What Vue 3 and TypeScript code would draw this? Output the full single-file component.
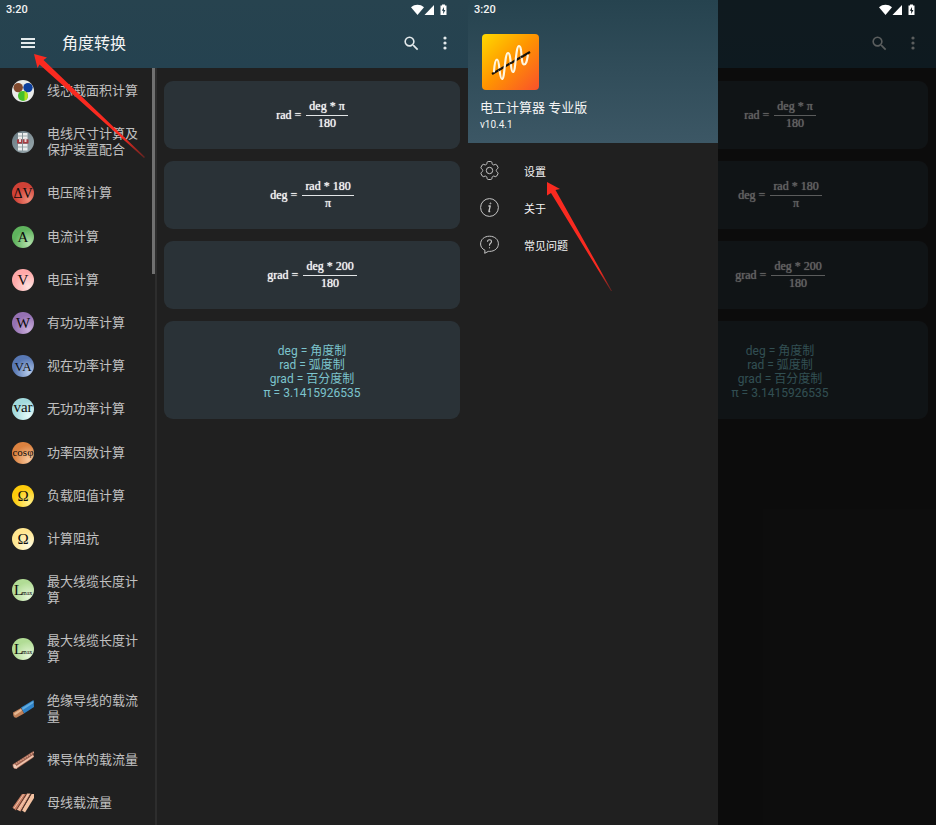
<script setup lang="ts">
interface Entry {
  label: string
  icon: string
  glyph?: string
  size?: number
}

interface Formula {
  left: string
  top: string
  bottom: string
}

interface Screen {
  id: string
  drawer: boolean
}

const screens: Screen[] = [
  { id: 'main', drawer: false },
  { id: 'menu', drawer: true },
]

const entries: Entry[] = [
  { label: '线芯截面积计算', icon: 'cores' },
  { label: '电线尺寸计算及保护装置配合', icon: 'breaker' },
  { label: '电压降计算', icon: 'red', glyph: 'ΔV', size: 14 },
  { label: '电流计算', icon: 'green', glyph: 'A', size: 15 },
  { label: '电压计算', icon: 'pink', glyph: 'V', size: 15 },
  { label: '有功功率计算', icon: 'purple', glyph: 'W', size: 15 },
  { label: '视在功率计算', icon: 'blue', glyph: 'VA', size: 13 },
  { label: '无功功率计算', icon: 'aqua', glyph: 'var', size: 15 },
  { label: '功率因数计算', icon: 'orange', glyph: 'cosφ', size: 11 },
  { label: '负载阻值计算', icon: 'yellow', glyph: 'Ω', size: 15 },
  { label: '计算阻抗', icon: 'cream', glyph: 'Ω', size: 15 },
  { label: '最大线缆长度计算', icon: 'lime', glyph: 'L' },
  { label: '最大线缆长度计算', icon: 'lime', glyph: 'L' },
  { label: '绝缘导线的载流量', icon: 'insulated' },
  { label: '裸导体的载流量', icon: 'bare' },
  { label: '母线载流量', icon: 'busbar' },
]

const formulas: Formula[] = [
  { left: 'rad', top: 'deg * π', bottom: '180' },
  { left: 'deg', top: 'rad * 180', bottom: 'π' },
  { left: 'grad', top: 'deg * 200', bottom: '180' },
]

const legend: string[] = ['deg = 角度制', 'rad = 弧度制', 'grad = 百分度制', 'π = 3.1415926535']

const menu = [
  { label: '设置', icon: 'gear' },
  { label: '关于', icon: 'info' },
  { label: '常见问题', icon: 'faq' },
]
</script>

<template>
  <div class="board">
    <section v-for="screen in screens" :key="screen.id" class="phone">
      <div class="status">
        <span>3:20</span>
        <svg class="status-icons" width="38" height="12" viewBox="0 0 38 12" aria-hidden="true">
          <path d="M0 3.2C3.6-.1 9.4-.1 13 3.2L6.5 11Z" />
          <path d="M23 1v10H13.500Z" />
          <path fill-rule="evenodd" d="M31 .5h3v1h1.500v9.500h-6V1.500H31ZM33 3l-2.200 3.800h1.400V10l2.200-4H33Z" />
        </svg>
      </div>

      <header class="appbar">
        <button v-if="!screen.drawer" class="icon-button nav-button" type="button" aria-label="菜单">
          <svg width="14" height="12" viewBox="0 0 14 12"><path d="M0 1h14v2H0zM0 5h14v2H0zM0 9h14v2H0z" fill="currentColor" /></svg>
        </button>
        <h1 v-if="!screen.drawer" class="title">角度转换</h1>
        <button class="icon-button search-button" type="button" aria-label="搜索">
          <svg width="19" height="19" viewBox="0 0 24 24">
            <path fill="currentColor" d="M15.500 14h-.79l-.28-.27A6.470 6.470 0 0 0 16 9.500 6.500 6.500 0 1 0 9.500 16c1.610 0 3.090-.59 4.230-1.570l.27.28v.79l5 4.990L20.490 19l-4.990-5Zm-6 0C7.010 14 5 11.990 5 9.500S7.010 5 9.500 5 14 7.010 14 9.500 11.990 14 9.500 14Z" />
          </svg>
        </button>
        <button class="icon-button more-button" type="button" aria-label="更多">
          <svg width="4" height="14" viewBox="0 0 4 14" fill="currentColor">
            <circle cx="2" cy="2" r="1.600" /><circle cx="2" cy="7" r="1.600" /><circle cx="2" cy="12" r="1.600" />
          </svg>
        </button>
      </header>

      <div class="body">
        <nav class="side">
          <ul v-if="!screen.drawer" class="entries">
            <li v-for="(entry, i) in entries" :key="i" class="entry">
              <a class="entry-link" href="#">
                <span class="badge" :class="entry.icon">
                  <svg width="22" height="22" viewBox="0 0 22 22" aria-hidden="true">
                    <template v-if="entry.icon === 'cores'">
                      <circle cx="6.200" cy="7.600" r="4.700" fill="#80492d" />
                      <circle cx="16" cy="7.600" r="4.700" fill="#0d3f9c" />
                      <circle cx="11" cy="15.900" r="5" fill="#45c02a" />
                      <path d="M12.500 11.200a5 5 0 0 1 0 9.400Z" fill="#b5e018" />
                    </template>
                    <template v-else-if="entry.icon === 'breaker'">
                      <path d="M6 2h4v6H6zM11 2h4.500v6H11zM6 13h4v6.500H6zM11 13h4.500v6.500H11z" fill="#eceeee" />
                      <path d="M5 8.500h11.500v4H5z" fill="#a63b40" />
                      <path d="M7 7h2v4H7zM12.500 7h2v4h-2z" fill="#e9d5d5" />
                      <path d="M5.500 5h10M5.500 16h10M10.500 2v17" stroke="#8a979b" stroke-width=".8" />
                    </template>
                    <template v-else-if="entry.icon === 'insulated'">
                      <path d="M9 9.500 21.500 2 22 9 12 15.500Z" fill="#2f83c9" />
                      <path d="M10 10 21.500 3v2L10.800 12Z" fill="#62acdf" />
                      <path d="M1 14.500 9 10l3 5.500-7.500 4.200Q1 20 1 14.500Z" fill="#bf8059" />
                      <path d="m2 15.300 7-4.300.9 1.700L2.800 17.500Z" fill="#e6b892" />
                    </template>
                    <template v-else-if="entry.icon === 'bare'">
                      <path d="M.5 15.500 21.500 2v6.500L4.500 20Q.5 20 .5 15.500Z" fill="#9c6250" />
                      <path d="m2 16 20-12.800" stroke="#d69b84" stroke-width="1.400" stroke-dasharray="1.500 1" />
                      <path d="m3.500 18.700 18-12" stroke="#f0c3ac" stroke-width="1.800" />
                      <path d="m1 15.500 3 .5 1 3.500-3-.3Z" fill="#efcbb8" />
                    </template>
                    <template v-else-if="entry.icon === 'busbar'">
                      <path d="M.5 15.500 10 2h4L4 18.500Z" fill="#c77d62" />
                      <path d="M4.500 17.500 15 1.500h3.500L8.500 19.500Z" fill="#e8a98a" />
                      <path d="M10 18.500 19.500 2H22v4L13 20.500Z" fill="#f4c2a2" />
                      <path d="M4.200 18 14.200 2.500M8.800 19.200 19 2" stroke="#5f342a" stroke-width=".9" />
                      <path d="M2 16.500 11.500 2.500M6.500 18 16.500 2" stroke="#f7d4bf" stroke-width=".8" />
                    </template>
                    <template v-else-if="entry.icon === 'lime'">
                      <text x="2" y="16" font-size="15">L</text>
                      <text x="10" y="16" font-size="6">max</text>
                    </template>
                    <text v-else x="11" :y="entry.glyph === 'var' || entry.icon === 'orange' ? 14 : 16" text-anchor="middle" :font-size="entry.size">{{ entry.glyph }}</text>
                  </svg>
                </span>
                <span class="entry-label">{{ entry.label }}</span>
              </a>
            </li>
          </ul>
          <div v-if="!screen.drawer" class="thumb"></div>
        </nav>

        <main class="cards">
          <article v-for="formula in formulas" :key="formula.left" class="card formula">
            <span>{{ formula.left }} =</span>
            <span class="fraction">
              <span class="numerator">{{ formula.top }}</span>
              <span class="denominator">{{ formula.bottom }}</span>
            </span>
          </article>
          <article class="card legend">
            <p v-for="line in legend" :key="line" class="legend-line">{{ line }}</p>
          </article>
        </main>
      </div>

      <template v-if="screen.drawer">
        <div class="scrim"></div>
        <aside class="drawer">
          <header class="drawer-head">
            <svg class="logo" width="57" height="56" viewBox="0 0 57 56" aria-hidden="true">
              <path d="M10 40 48 18" stroke="#17110a" stroke-width="2.200" />
              <path d="M12 37.500C12.500 30 13.500 25.500 15 25.500 18 25.500 17 45 20 45S22.500 19 26 19 28 38 31 38 33.500 12 37 12 38.500 30.500 42 30.500C44.500 30.500 45 26 45.800 21.500" fill="none" stroke="#fff6df" stroke-width="2.200" stroke-linecap="round" />
              <path d="m16.500 36.200 2.500-1.400M28 29.600l2-1.200M39 23.200l2-1.200" stroke="#17110a" stroke-width="2.200" />
            </svg>
            <p class="product">电工计算器 专业版</p>
            <p class="version">v10.4.1</p>
          </header>
          <nav>
            <ul class="menu">
              <li v-for="item in menu" :key="item.label">
                <a class="menu-link" href="#">
                  <svg v-if="item.icon === 'gear'" width="19" height="19" viewBox="2.500 2.500 19 19" class="line-icon" aria-hidden="true">
                    <path d="M9.594 3.940c.09-.542.56-.94 1.110-.94h2.593c.55 0 1.020.398 1.110.94l.213 1.281c.063.374.313.686.645.87.074.04.147.083.22.127.325.196.72.257 1.075.124l1.217-.456a1.125 1.125 0 0 1 1.370.49l1.296 2.247a1.125 1.125 0 0 1-.26 1.431l-1.003.827c-.293.241-.438.613-.43.992a7.723 7.723 0 0 1 0 .255c-.008.378.137.75.43.991l1.004.827c.424.35.534.955.26 1.430l-1.298 2.247a1.125 1.125 0 0 1-1.369.491l-1.217-.456c-.355-.133-.75-.072-1.076.124a6.470 6.470 0 0 1-.22.128c-.331.183-.581.495-.644.869l-.213 1.281c-.09.543-.56.94-1.110.94h-2.594c-.55 0-1.019-.398-1.110-.94l-.213-1.281c-.062-.374-.312-.686-.644-.87a6.520 6.520 0 0 1-.22-.127c-.325-.196-.72-.257-1.076-.124l-1.217.456a1.125 1.125 0 0 1-1.369-.49l-1.297-2.247a1.125 1.125 0 0 1 .26-1.431l1.004-.827c.292-.24.437-.613.43-.991a6.932 6.932 0 0 1 0-.255c.007-.38-.138-.751-.43-.992l-1.004-.827a1.125 1.125 0 0 1-.26-1.430l1.297-2.247a1.125 1.125 0 0 1 1.370-.491l1.216.456c.356.133.751.072 1.076-.124.072-.044.146-.086.22-.128.332-.183.582-.495.644-.869l.214-1.280Z" />
                    <circle cx="12" cy="12" r="3.200" />
                  </svg>
                  <svg v-else-if="item.icon === 'info'" width="19" height="19" viewBox="0 0 19 19" class="line-icon" aria-hidden="true">
                    <circle cx="9.500" cy="9.500" r="8.900" />
                    <path d="M8.400 8h1.800L8.900 13.500h1.300" stroke-width="1.300" />
                    <circle cx="10.400" cy="5.400" r=".5" />
                  </svg>
                  <svg v-else width="19" height="19" viewBox="0 0 19 19" class="line-icon" aria-hidden="true">
                    <path d="M5 15.300C2.200 14 .6 11.700.6 9 .6 4.500 4.300 1.200 9.500 1.200s8.900 3.300 8.900 7.600-3.700 7.600-8.900 7.600H8.300L4.700 18.300Z" />
                    <path d="M7.500 6.800C7.500 5.500 8.300 4.800 9.500 4.800s2 .8 2 1.900c0 1.500-2 1.700-2 3.400v.6M9.500 12.300v1" stroke-width="1.100" />
                  </svg>
                  <span>{{ item.label }}</span>
                </a>
              </li>
            </ul>
          </nav>
        </aside>
        <svg class="pointer pointer-settings" width="66" height="110" viewBox="0 0 66 110" aria-hidden="true">
          <defs>
            <linearGradient id="fade-settings" gradientUnits="userSpaceOnUse" x1="1" y1="1" x2="65" y2="109">
              <stop offset=".8" stop-color="#f92a20" /><stop offset="1" stop-color="#f92a20" stop-opacity=".3" />
            </linearGradient>
          </defs>
          <path d="M0 0 13 7 8.500 8 65 109 64 109 4 11 0 13.500Z" fill="url(#fade-settings)" />
        </svg>
      </template>

      <svg v-else class="pointer pointer-nav" width="112" height="104" viewBox="0 0 112 104" aria-hidden="true">
        <defs>
          <linearGradient id="fade-nav" gradientUnits="userSpaceOnUse" x1="0" y1="0" x2="111" y2="103">
            <stop offset=".8" stop-color="#f92a20" /><stop offset="1" stop-color="#f92a20" stop-opacity=".3" />
          </linearGradient>
        </defs>
        <path d="M0 0 13 3.500 9.500 6 111 103 110 104 5.500 10.500 3.500 14Z" fill="url(#fade-nav)" />
      </svg>
    </section>
  </div>
</template>

<style>
body {
  margin: 0;
  background: #202020;
}
</style>

<style scoped>
.board {
  display: flex;
  min-height: 100vh;
  font-family: Roboto, "Noto Sans CJK SC", sans-serif;
  color: #f4f4f4;
}

.phone {
  position: relative;
  display: flex;
  flex: 1;
  flex-direction: column;
  min-width: 0;
  overflow: hidden;
  background: #202020;
}

.status {
  position: absolute;
  z-index: 3;
  top: 0;
  left: 0;
  right: 0;
  display: flex;
  align-items: center;
  justify-content: space-between;
  height: 19px;
  padding: 0 19px 0 6px;
  font-size: 11px;
  font-weight: 500;
}

.status-icons {
  fill: #fff;
}

.appbar {
  display: flex;
  align-items: center;
  height: 48px;
  padding-top: 20px;
  background: linear-gradient(#27434f, #254250);
}

.icon-button {
  display: flex;
  align-items: center;
  justify-content: center;
  height: 46px;
  margin-bottom: 2px;
  padding: 0;
  border: 0;
  background: none;
  color: #e4eaec;
}

.nav-button {
  width: 56px;
}

.search-button {
  width: 40px;
  margin-left: auto;
}

.more-button {
  width: 28px;
  margin-right: 9px;
}

.title {
  margin: 0 0 0 6px;
  font-size: 16px;
  font-weight: 400;
  line-height: 24px;
}

.body {
  display: flex;
  flex: 1;
}

.side {
  display: flex;
  flex: none;
  box-sizing: border-box;
  width: 157px;
  border-right: 2px solid #2d2d2d;
}

.entries {
  display: flex;
  flex: 1;
  flex-direction: column;
  margin: 0;
  padding: 1px 0;
  list-style: none;
}

.entry {
  display: flex;
  flex: 1 0 auto;
}

.entry-link {
  display: flex;
  flex: 1;
  gap: 13px;
  align-items: center;
  padding: 14px 10px 13px 12px;
  color: #c0c0c0;
  font-size: 13px;
  line-height: 16px;
  text-decoration: none;
}

.entry-label {
  flex: 1;
}

.thumb {
  width: 3px;
  height: 206px;
  background: #707070;
}

.badge {
  display: flex;
  flex: none;
  width: 22px;
  height: 22px;
  margin: -3px 0;
  border-radius: 50%;
  overflow: hidden;
  color: #111;
  font-family: "Liberation Serif", serif;
}

.badge svg {
  fill: #0c0c0c;
}

.cores { background: #e9ebe9; }
.breaker { background: linear-gradient(135deg, #66777f, #9babb0); }
.red { background: radial-gradient(circle at 75% 80%, #f08a78, #cf4136 55%); }
.green { background: radial-gradient(circle at 75% 80%, #b3e0ac, #5fb35d 60%); }
.pink { background: radial-gradient(circle at 75% 80%, #ffe3e0, #ffa9a9 60%); }
.purple { background: radial-gradient(circle at 75% 80%, #c9aedb, #9571b2 60%); }
.blue { background: radial-gradient(circle at 75% 80%, #b3c8e8, #5878b4 60%); }
.aqua { background: radial-gradient(circle at 75% 80%, #e6fafa, #a2dadd 60%); }
.orange { background: radial-gradient(circle at 75% 80%, #f8c79c, #dc8240 60%); }
.yellow { background: radial-gradient(circle at 75% 80%, #fff08a, #fdcb0b 60%); }
.cream { background: radial-gradient(circle at 75% 80%, #fffbe0, #ffe68f 60%); }
.lime { background: radial-gradient(circle at 75% 80%, #e5f7d8, #b1dc95 60%); }
.insulated, .bare, .busbar { border-radius: 0; }

.cards {
  display: flex;
  flex: 1;
  flex-direction: column;
  gap: 12px;
  min-width: 0;
  padding: 13px 8px 13px 7px;
}

.card {
  box-sizing: border-box;
  border-radius: 9px;
  background: #2a3237;
}

.formula {
  display: flex;
  gap: 5px;
  align-items: center;
  justify-content: center;
  height: 68px;
  font-family: "Liberation Serif", serif;
  font-size: 12px;
  line-height: 16px;
  text-shadow: 0 0 1px #fff;
}

.fraction {
  display: flex;
  flex-direction: column;
  text-align: center;
}

.numerator {
  padding: 0 3px 1px;
  border-bottom: 1px solid #e3e6e7;
}

.denominator {
  padding-bottom: 3px;
  line-height: 14px;
}

.legend {
  padding: 23px 12px 19px;
  color: #7cc4cd;
  font-size: 12px;
  text-align: center;
}

.legend-line {
  margin: 0;
  line-height: 14px;
}

.scrim {
  position: absolute;
  z-index: 1;
  inset: 0;
  background: rgba(0, 0, 0, 0.6);
}

.drawer {
  position: absolute;
  z-index: 2;
  top: 0;
  bottom: 0;
  left: 0;
  width: 250px;
  background: #202020;
}

.drawer-head {
  padding: 34px 12px 11px;
  background: linear-gradient(#26434f, #3c5765);
}

.logo {
  display: block;
  margin-left: 2px;
  border-radius: 4px;
  background: linear-gradient(135deg, #ffd900, #ff9500 48%, #f9512b);
}

.product {
  margin: 8px 0 0;
  font-size: 13px;
  line-height: 20px;
}

.version {
  margin: 0;
  font-size: 10px;
  line-height: 14px;
}

.menu {
  margin: 0;
  padding: 9px 0;
  list-style: none;
}

.menu-link {
  display: flex;
  gap: 25px;
  align-items: center;
  height: 37px;
  padding: 0 12px;
  color: #f4f4f4;
  font-size: 11px;
  text-decoration: none;
}

.line-icon {
  flex: none;
  fill: none;
  stroke: #c4c4c4;
  stroke-width: 1;
  stroke-linejoin: round;
}

.pointer {
  position: absolute;
  z-index: 4;
  pointer-events: none;
}

.pointer-nav {
  top: 54px;
  left: 34px;
}

.pointer-settings {
  top: 182px;
  left: 79px;
}
</style>
